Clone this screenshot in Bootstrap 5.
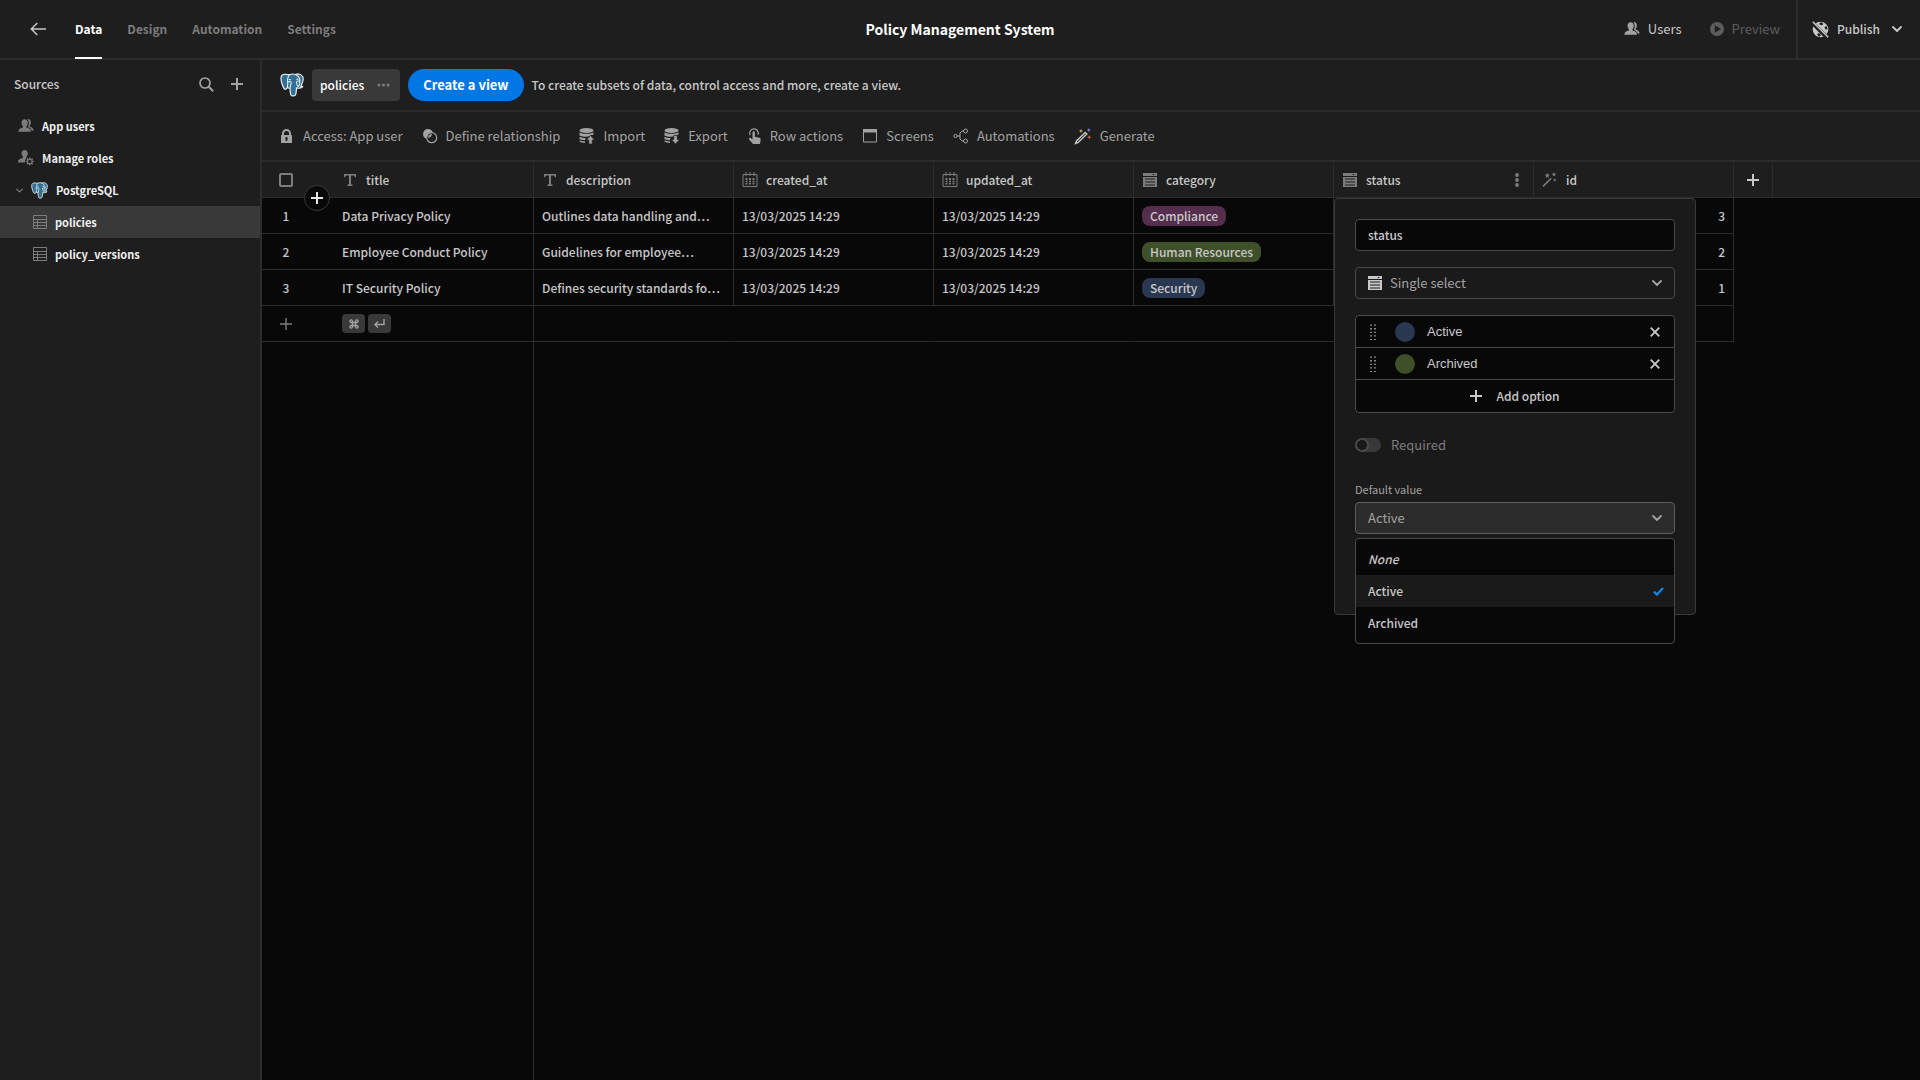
<!DOCTYPE html>
<html lang="en" data-bs-theme="dark">
<head>
<meta charset="utf-8">
<meta name="viewport" content="width=device-width, initial-scale=1">
<title>Policy Management System</title>
<link href="https://cdn.jsdelivr.net/npm/bootstrap@5.3.0/dist/css/bootstrap.min.css" rel="stylesheet">
<style>
:root{--g50:#080808;--g75:#1a1a1a;--g100:#1e1e1e;--g200:#2c2c2c;--g300:#393939;--g400:#494949;--g500:#5c5c5c;--g600:#7c7c7c;--g700:#a2a2a2;--g800:#c8c8c8;--g900:#efefef;--fs:12px;--fs-quiet:13px}
body{font-family:"Noto Sans CJK SC","Noto Sans",sans-serif;font-size:var(--fs);line-height:20px;font-weight:500;color:var(--g800);background:var(--g50)}
button{background:none;border:0;padding:0;color:inherit;font:inherit}
a{color:inherit;text-decoration:none}
svg{display:block;flex:none;fill:currentColor}
.ln{fill:none;stroke:currentColor}
.topbar{height:60px;background:var(--g100);border-bottom:2px solid var(--g200)}
.backlink{padding:0 29px 0 30px}
.tabs{gap:25px;color:var(--g600);font-weight:700}
.tabs a{height:60px;line-height:60px;border-bottom:2px solid transparent}
.tabs a.on{color:#fff;border-color:#fff}
.apptitle{font-size:14px;font-weight:700;color:#fff}
.quiet{font-size:var(--fs-quiet);font-weight:400}
.off{color:var(--g500)}
.pub{height:58px;border-left:2px solid var(--g200);padding:0 18px 0 14px}
.side{width:262px;background:var(--g100);border-right:2px solid var(--g200)}
.sidehead{height:48px;margin-bottom:2px;padding:0 17px 0 14px}
.srclist{font-size:11px;font-weight:700;color:var(--g900)}
.srclist a{height:32px;padding-left:18px;gap:8px}
.srclist a.src{padding-left:16px}
.srclist a.sub{padding-left:32px;gap:7px}
.srclist a.on{background:var(--g300)}
.bar1{height:52px;background:var(--g100);border-bottom:2px solid var(--g200);padding:0 18px}
.bar2{height:50px;background:var(--g100);border-bottom:2px solid var(--g200);padding:0 17px;gap:19px;color:var(--g700);font-size:var(--fs-quiet);font-weight:400}
.bar2 button{gap:8px}
.viewtab{height:32px;background:var(--g300);border-radius:4px;padding:0 10px 0 8px;color:#fff;gap:13px}
.cta{height:32px;line-height:20px;border-radius:16px;background:#0177e6;color:#fff;font-size:13px;font-weight:700;padding:0 14px}
.cta:hover{background:#0169cc;color:#fff}
.grid{table-layout:fixed;border-collapse:separate;border-spacing:0;width:100%}
.grid th,.grid td{height:36px;padding:0 8px;border-bottom:1px solid var(--g200);border-right:1px solid var(--g200);white-space:nowrap;font-weight:500}
.grid th{background:var(--g100);position:relative}
.grid .gut{border-right:0;text-align:center;padding:0 24px 0 0}
.grid .rest,.grid .none{border-right:0}
.grid td.none{border-bottom:0}
.grid .newrow td{border-right-color:transparent}
.grid .newrow td.keep{border-right-color:var(--g200)}
.hd{gap:8px}
.hd svg{color:var(--g600)}
.tick{appearance:none;display:block;margin:0 auto;width:14px;height:14px;border:2px solid var(--g600);border-radius:2px;background:transparent}
.addrow{position:absolute;left:42px;top:23px;width:26px;height:26px;border-radius:50%;background:var(--g50);border:1px solid var(--g300);z-index:3;color:#e6e6e6}
.pill{display:inline-block;height:20px;line-height:20px;border-radius:8px;padding:0 8px;vertical-align:middle}
.purple{background:#552e4e}.green{background:#3f4f2a}.blue{background:#2a3750}
.keys{gap:3px}
.keycap{width:23px;height:19px;border-radius:4px;background:var(--g300);color:var(--g700)}
.tail{width:272px;border-right:1px solid var(--g200)}
.pop{position:absolute;left:0;top:36px;width:362px;height:417px;background:var(--g75);border:1px solid var(--g300);border-radius:4px;padding:20px;z-index:5;color:var(--g800)}
.box{border:1px solid var(--g400);border-radius:4px;height:32px}
.box input,.box select,.opts input{appearance:none;background:transparent;border:0;outline:0;color:inherit;font:inherit;padding:0;min-width:0}
.box select{color:var(--g700);font-size:var(--fs-quiet);font-weight:400}
.box .arrow{color:var(--g700);margin-right:12px}
.dark{background:var(--g50)}
.open{background:var(--g200);border-color:var(--g500)}
.opts{border:1px solid var(--g400);border-radius:4px;background:var(--g50)}
.opts>div{height:32px;border-bottom:1px solid var(--g400);padding:0 14px 0 14px;gap:12px}
.opts input{font-family:"Liberation Sans",sans-serif;font-size:13px}
.opts .handle{margin-right:7px}
.opts button.add{height:32px;gap:14px}
.dot{width:20px;height:20px;border-radius:50%}
.req{height:32px;gap:10px;color:var(--g600)}
.switch{appearance:none;width:26px;height:14px;margin:0;border-radius:7px;background:radial-gradient(circle at 7px 7px,var(--g75) 5px,var(--g400) 5px,var(--g400) 7px,transparent 7px) var(--g300)}
.menu{position:absolute;left:-1px;right:-1px;top:35px;background:var(--g50);border:1px solid var(--g400);border-radius:4px;padding:4px 0;z-index:6}
.menu button{display:flex;align-items:center;justify-content:space-between;width:100%;height:32px;padding:0 10px 0 12px}
.menu button.on{background:var(--g75)}
.fieldlabel{font-size:11px;font-weight:400;color:var(--g700);line-height:17px}
</style>
</head>
<body class="vh-100 d-flex flex-column overflow-hidden">
<svg width="0" height="0" class="position-absolute" aria-hidden="true">
  <symbol id="pg" viewBox="0 0 24 24">
    <path d="M6.2 1.4C3 .8.7 2.3 1 6c.2 3 1.900 8.500 3.500 10 1 .9 2-.4 3-1.600.6.6 1.500.8 2.500.6.1 2.500.2 5.200.8 6.700.7 1.700 4.300 1.800 5-.6.5-1.900.6-4.400.7-6.200 1.800.5 4.400.3 5.900-.9.700-.6-.2-.9-1.500-.9C22.500 10 24 5.500 22.600 3.500 20.500.8 17.500.7 15.400 1.500 13.500.9 11 .900 9.500 1.800 8.500 1.500 7.400 1.400 6.200 1.400z" fill="#336f93" stroke="#e9eef2" stroke-width="1.200"/>
    <path d="M9.500 1.900C7 4 7.500 8.500 7.700 10.500c.1 1.500-.3 2.600-.2 3.600M8 9c1-.7 3-.8 3.200.5.200 1.700-1.200 2.900-1 4.700M15.500 1.500c3 1.700 4.600 4.500 4.300 6.200-.4 2 .4 3.300-.9 5.200M16.500 9c1-1.200 2.500-1 3.300-.6M16.400 9c.2 2 .9 3.700 1.900 4.600M9.300 6.500l1.300.3M16.800 6.300l1.200-.2" fill="none" stroke="#e9eef2" stroke-width="1.100" stroke-linecap="round"/>
  </symbol>
  <symbol id="users" viewBox="0 0 18 18">
    <path d="M7.500 1.500c2.200 0 3.500 1.600 3.500 3.800 0 1.700-.6 3-1.500 4v1.300c2.700.6 5 1.700 5 4v.9H.5v-.9c0-2.300 2.300-3.400 5-4V9.300C4.600 8.300 4 7 4 5.300c0-2.200 1.300-3.800 3.500-3.800z"/>
    <path d="M10.500 1.200C13 .9 14.600 2.600 14.500 5c0 1.600-.6 2.700-1.400 3.600v1.100c2.300.7 4.400 2 4.500 4.500h-2.200c-.4-2.100-2-3.500-4.300-4.200.7-1.200 1.100-2.700 1-4.400-.1-1.800-.6-3.400-1.600-4.400z"/>
  </symbol>
  <symbol id="roles" viewBox="0 0 18 18">
    <path d="M7.500 0C9.700 0 11 1.500 11 3.700c0 1.700-.6 3-1.500 4V9l-.9 1.300c-.8 1.100-.9 2.400-.6 3.700H0v-.9c0-2.400 2.500-3.500 5.500-4.100V7.700C4.600 6.700 4 5.400 4 3.700 4 1.500 5.300 0 7.500 0z"/>
    <circle cx="13.300" cy="12.800" r="2.600" class="ln" stroke-width="1.300"/>
    <path class="ln" stroke-width="1.400" d="M13.300 8.300v1.500M13.300 15.800v1.500M8.800 12.800h1.500M16.300 12.800h1.500M10.100 9.600l1.100 1.100M15.400 14.900l1.100 1.100M16.500 9.600l-1.100 1.100M11.200 14.900l-1.100 1.100"/>
  </symbol>
  <symbol id="tbl" viewBox="0 0 14 14"><path class="ln" stroke-width="1" d="M.5.5h13v13H.5zM.5 4.500h13M.5 7.500h13M.5 10.500h13M4.500 4.500v9"/></symbol>
  <symbol id="plus" viewBox="0 0 12 12"><path class="ln" stroke-width="2" d="M6 0v12M0 6h12"/></symbol>
  <symbol id="plusthin" viewBox="0 0 12 12"><path class="ln" stroke-width="1.400" d="M6 0v12M0 6h12"/></symbol>
  <symbol id="chev" viewBox="0 0 10 6"><path class="ln" stroke-width="1.800" stroke-linecap="round" stroke-linejoin="round" d="M1 1l4 4 4-4"/></symbol>
  <symbol id="txt" viewBox="0 0 12 12"><path d="M0 0h12v3.200h-1.200c0-1.200-.5-1.700-1.700-1.700H7v8.300c0 .6.400.8 1.500.9V12h-5v-1.300c1.100-.1 1.500-.3 1.500-.9V1.500H2.900c-1.200 0-1.700.5-1.700 1.700H0z"/></symbol>
  <symbol id="cal" viewBox="0 0 15 15"><path class="ln" d="M.5 2.500h14v12H.5zM3.500 0v4M11.500 0v4M7.500 0v4"/><path d="M3 6h2v2H3zM6.500 6h2v2h-2zM10 6h2v2h-2zM3 8.700h2v1.600H3zM6.500 8.700h2v1.600h-2zM10 8.700h2v1.600h-2zM3 11h2v1.600H3zM6.500 11h2v1.600h-2zM10 11h2v1.600h-2z"/></symbol>
  <symbol id="opt" viewBox="0 0 14 14"><path fill-rule="evenodd" d="M0 0h14v3H0zM9.200 1l1.300 1.300L11.800 1zM0 4h14v10H0zM2 5.400v1.100h10V5.400zM2 8.400v1.100h10V8.400zM2 11.400v1.100h10v-1.100z"/></symbol>
  <symbol id="wand" viewBox="0 0 15 15"><path class="ln" stroke-width="1.600" d="M.6 14.400L8.700 6.300"/><path d="M4.800.8l.7 1.700 1.900.3-1.400 1.200.3 1.900-1.500-1-1.700 1 .5-1.900L2.200 2.800l1.900-.3zM11.500 0l.6 1.500 1.600.2-1.200 1 .3 1.600-1.300-.8-1.400.8.400-1.600-1.200-1 1.600-.2zM12.300 6.200l.4 1.200 1.300.2-1 .8.200 1.200-.9-.6-1.100.6.300-1.200-.9-.8 1.200-.2z"/></symbol>
  <symbol id="cross" viewBox="0 0 10 10"><path class="ln" stroke-width="1.800" d="M.7.7l8.600 8.600M9.300.7L.7 9.300"/></symbol>
  <symbol id="grip" viewBox="0 0 6 16"><path class="ln" stroke-width="1.300" stroke-dasharray="1.300 2.300" d="M1 .5v15.500M5 .5v15.500"/></symbol>
  <symbol id="db" viewBox="0 0 16 16"><ellipse cx="7.500" cy="2.500" rx="7" ry="2.500"/><path d="M.5 4.200c2.500 2.200 11.500 2.200 14 0v2.300c-1 .5-2 .7-3 .8L9.500 8.600c-3.500.4-7-.2-9-1.200zM.5 8.800c1.500.8 3.800 1.200 6.200 1.200l-.9 2.200c-2-.1-4-.5-5.300-1.100zM.5 12.300c1.400.7 3.500 1.100 5.500 1.200V15c-2.500-.1-4.700-.6-5.500-1.500z"/></symbol>
</svg>

<header class="topbar d-flex align-items-center flex-shrink-0">
  <div class="d-flex align-items-center flex-fill w-25">
    <a href="#" class="backlink" aria-label="Back"><svg width="16" height="14" viewBox="0 0 16 14"><path class="ln" stroke-width="1.500" d="M16 7H1.500M7.300 1l-6 6 6 6"/></svg></a>
    <nav class="tabs d-flex"><a href="#" class="on">Data</a><a href="#">Design</a><a href="#">Automation</a><a href="#">Settings</a></nav>
  </div>
  <div class="apptitle">Policy Management System</div>
  <div class="d-flex align-items-center justify-content-end flex-fill w-25">
    <button class="quiet d-flex align-items-center gap-2"><svg width="16" height="16" color="#a2a2a2"><use href="#users"/></svg>Users</button>
    <button class="quiet off d-flex align-items-center gap-2 ms-4 me-3" disabled><svg class="ms-1" width="14" height="14" viewBox="0 0 14 14"><path fill-rule="evenodd" d="M7 0a7 7 0 1 0 0 14A7 7 0 0 0 7 0zM4.800 3.300v7.400L11 7z"/></svg>Preview</button>
    <button class="pub d-flex align-items-center gap-2"><svg width="17" height="17" viewBox="0 0 17 17"><circle cx="8.500" cy="8.500" r="7.800"/><path d="M9 1l2.500 2-2 1.500L7 3zM5 13l2-1 2 2-2 2zM12.500 6l2-1 1 3-2 .8z" fill="#1e1e1e"/><path d="M0 1.500L15 16.500" stroke="#1e1e1e" stroke-width="4"/><path d="M.8.8l15.400 15.400" stroke="currentColor" stroke-width="1.600"/></svg>Publish<svg class="ms-1" width="10" height="6"><use href="#chev"/></svg></button>
  </div>
</header>

<div class="d-flex flex-fill">
  <aside class="side flex-shrink-0">
    <div class="sidehead d-flex align-items-center"><span class="me-auto">Sources</span>
      <button aria-label="Search" class="me-3"><svg width="16" height="15" viewBox="0 0 16 15" color="#a2a2a2"><circle class="ln" cx="6" cy="6" r="5" stroke-width="1.700"/><path class="ln" stroke-width="2" d="M9.700 9.700l4.500 4.500"/></svg></button>
      <button aria-label="Add source"><svg width="12" height="12" color="#a2a2a2"><use href="#plus"/></svg></button>
    </div>
    <nav class="srclist">
      <a href="#" class="d-flex align-items-center"><svg width="16" height="16" color="#7c7c7c"><use href="#users"/></svg>App users</a>
      <a href="#" class="d-flex align-items-center"><svg width="16" height="16" color="#7c7c7c"><use href="#roles"/></svg>Manage roles</a>
      <a href="#" class="src d-flex align-items-center"><svg width="7" height="5" color="#7c7c7c"><use href="#chev"/></svg><svg width="17" height="17"><use href="#pg"/></svg>PostgreSQL</a>
      <a href="#" class="sub on d-flex align-items-center"><svg width="16" height="14" color="#7c7c7c"><use href="#tbl"/></svg>policies</a>
      <a href="#" class="sub d-flex align-items-center"><svg width="16" height="14" color="#7c7c7c"><use href="#tbl"/></svg>policy_versions</a>
    </nav>
  </aside>

  <main class="flex-fill d-flex flex-column">
    <div class="bar1 d-flex align-items-center gap-2">
      <svg width="24" height="24"><use href="#pg"/></svg>
      <button class="viewtab d-flex align-items-center">policies<svg width="13" height="4" viewBox="0 0 13 4" color="#7c7c7c"><circle cx="2" cy="2" r="1.500"/><circle cx="6.500" cy="2" r="1.500"/><circle cx="11" cy="2" r="1.500"/></svg></button>
      <button class="btn cta">Create a view</button>
      <span>To create subsets of data, control access and more, create a view.</span>
    </div>
    <div class="bar2 d-flex align-items-center">
      <button class="d-flex align-items-center"><svg width="16" height="16" viewBox="0 0 16 16"><path fill-rule="evenodd" d="M2 7h1V5.500a4.500 4.500 0 0 1 9 0V7h1v8H2zM5 7h5V5.500a2.500 2.500 0 0 0-5 0zM6.300 10.300l.6 2.700h1.200l.6-2.700a1.200 1.200 0 1 0-2.400 0z"/></svg>Access: App user</button>
      <button class="d-flex align-items-center"><svg width="16" height="16" viewBox="0 0 16 16"><path d="M6 1a5 5 0 0 1 4.800 3.600A5.300 5.300 0 0 0 4.700 10.800 5 5 0 0 1 6 1z"/><circle class="ln" cx="9.700" cy="9.700" r="5" stroke-width="1.200"/><path d="M6 9.800c.2-2.300 1.600-3.800 3.800-4 .2 2.200-1.300 4-3.800 4z"/></svg>Define relationship</button>
      <button class="d-flex align-items-center"><svg width="16" height="16" viewBox="0 0 16 16"><use href="#db" width="16" height="16"/><path d="M11.500 7.500l4 4.500h-2.300v4H9.800v-4H7.500z" stroke="#1e1e1e" stroke-width=".6"/></svg>Import</button>
      <button class="d-flex align-items-center"><svg width="16" height="16" viewBox="0 0 16 16"><use href="#db" width="16" height="16"/><path d="M11.500 16l4-4.500h-2.300v-4H9.800v4H7.500z" stroke="#1e1e1e" stroke-width=".6"/></svg>Export</button>
      <button class="d-flex align-items-center"><svg width="15" height="16" viewBox="0 0 15 16"><path class="ln" stroke-width="1.200" d="M3.200 7.200a4.300 4.300 0 1 1 7.700-.4"/><path d="M5.500 4.500c0-1.700 2.400-1.700 2.400 0v4.300l4.500.9c1.200.3 1.400 1 1.200 2.200L13 16H6l-3.800-4.600c-.8-1.200.6-2 1.500-1.300l1.800 1.300z"/></svg>Row actions</button>
      <button class="d-flex align-items-center"><svg width="16" height="14" viewBox="0 0 16 14"><path class="ln" d="M1.500.500h13v12.500h-13z"/><path d="M1 0h14v3.500H1z"/></svg>Screens</button>
      <button class="d-flex align-items-center"><svg width="16" height="16" viewBox="0 0 16 16"><g class="ln"><circle cx="2.500" cy="8" r="1.600"/><circle cx="12.500" cy="3" r="2"/><circle cx="12.500" cy="13" r="2"/><path d="M4.100 8H7M10.500 3H9L7 5v6l2 2h1.500"/></g></svg>Automations</button>
      <button class="d-flex align-items-center"><svg width="18" height="17" viewBox="0 0 18 17"><path d="M1.500 15.500l1-2.500 8.700-8.500 1.600 1.500-8.600 8.500z" fill="none" stroke="#c8c8c8" stroke-width="1.400"/><path d="M7 .8l.6 1.600 1.600.6-1.600.6L7 5.200l-.6-1.600L4.800 3l1.600-.6z" fill="#e8c14d"/><path d="M14.800 0l.6 1.500 1.600.6-1.600.6-.6 1.500-.6-1.500-1.600-.6 1.600-.6z" fill="#7d84f5"/><path d="M15.200 7l.6 1.600 1.700.6-1.700.6-.6 1.700-.6-1.700-1.700-.6 1.700-.6z" fill="#e8594f"/></svg>Generate</button>
    </div>

    <table class="grid">
      <colgroup><col style="width:72px"><col style="width:200px"><col style="width:200px"><col style="width:200px"><col style="width:200px"><col style="width:200px"><col style="width:200px"><col style="width:200px"><col style="width:39px"><col></colgroup>
      <thead><tr>
        <th class="gut"><input type="checkbox" class="tick" aria-label="Select all rows"><button class="addrow d-flex align-items-center justify-content-center" aria-label="Add row"><svg width="12" height="12"><use href="#plus"/></svg></button></th>
        <th><div class="hd d-flex align-items-center"><svg width="16" height="12"><use href="#txt"/></svg>title</div></th>
        <th><div class="hd d-flex align-items-center"><svg width="16" height="12"><use href="#txt"/></svg>description</div></th>
        <th><div class="hd d-flex align-items-center"><svg width="16" height="15"><use href="#cal"/></svg>created_at</div></th>
        <th><div class="hd d-flex align-items-center"><svg width="16" height="15"><use href="#cal"/></svg>updated_at</div></th>
        <th><div class="hd d-flex align-items-center"><svg width="16" height="14"><use href="#opt"/></svg>category</div></th>
        <th><div class="hd d-flex align-items-center"><svg width="16" height="14"><use href="#opt"/></svg>status
          <button class="ms-auto me-1" aria-label="Column menu"><svg width="8" height="14" viewBox="0 0 8 14"><circle cx="4" cy="2" r="1.900"/><circle cx="4" cy="7" r="1.900"/><circle cx="4" cy="12" r="1.900"/></svg></button></div>
          <form class="pop d-flex flex-column gap-3" onsubmit="return false">
            <div class="box dark d-flex align-items-center px-2"><input class="flex-fill ms-1" value="status" aria-label="Column name"></div>
            <div class="box d-flex align-items-center ps-2"><svg class="ms-1 me-2" width="14" height="14"><use href="#opt"/></svg><select class="flex-fill" aria-label="Type"><option>Single select</option></select><svg width="10" height="6" class="arrow"><use href="#chev"/></svg></div>
            <div class="opts d-flex flex-column">
              <div class="d-flex align-items-center"><svg class="handle" width="6" height="16"><use href="#grip"/></svg><span class="dot blue"></span><input class="flex-fill" value="Active" aria-label="Option 1"><button aria-label="Remove Active"><svg width="10" height="10"><use href="#cross"/></svg></button></div>
              <div class="d-flex align-items-center"><svg class="handle" width="6" height="16"><use href="#grip"/></svg><span class="dot green"></span><input class="flex-fill" value="Archived" aria-label="Option 2"><button aria-label="Remove Archived"><svg width="10" height="10"><use href="#cross"/></svg></button></div>
              <button class="add d-flex align-items-center justify-content-center"><svg width="12" height="12"><use href="#plus"/></svg>Add option</button>
            </div>
            <div class="req quiet d-flex align-items-center"><input type="checkbox" role="switch" class="switch" id="req"><label for="req">Required</label></div>
            <div>
              <label class="fieldlabel d-block mt-1 mb-1" for="def">Default value</label>
              <div class="box open d-flex align-items-center position-relative"><select id="def" class="flex-fill ms-2 ps-1"><option>Active</option></select><svg width="10" height="6" class="arrow"><use href="#chev"/></svg>
                <div class="menu" role="listbox">
                  <button role="option"><i>None</i></button>
                  <button role="option" class="on" aria-selected="true">Active<svg width="11" height="9" viewBox="0 0 11 9" color="#1385e0"><path class="ln" stroke-width="2.200" d="M.9 4.600l3 3L10 .9"/></svg></button>
                  <button role="option">Archived</button>
                </div>
              </div>
            </div>
          </form></th>
        <th><div class="hd d-flex align-items-center"><svg width="16" height="15"><use href="#wand"/></svg>id</div></th>
        <th><button class="d-block mx-auto" aria-label="Add column"><svg width="12" height="12"><use href="#plus"/></svg></button></th>
        <th class="rest"></th>
      </tr></thead>
      <tbody>
        <tr><td class="gut">1</td><td>Data Privacy Policy</td><td>Outlines data handling and…</td><td>13/03/2025 14:29</td><td>13/03/2025 14:29</td><td><span class="pill purple">Compliance</span></td><td></td><td class="text-end">3</td><td class="none" colspan="2"></td></tr>
        <tr><td class="gut">2</td><td>Employee Conduct Policy</td><td>Guidelines for employee…</td><td>13/03/2025 14:29</td><td>13/03/2025 14:29</td><td><span class="pill green">Human Resources</span></td><td></td><td class="text-end">2</td><td class="none" colspan="2"></td></tr>
        <tr><td class="gut">3</td><td>IT Security Policy</td><td>Defines security standards fo…</td><td>13/03/2025 14:29</td><td>13/03/2025 14:29</td><td><span class="pill blue">Security</span></td><td></td><td class="text-end">1</td><td class="none" colspan="2"></td></tr>
        <tr class="newrow"><td class="gut"><svg class="mx-auto" width="12" height="12" color="#7c7c7c"><use href="#plusthin"/></svg></td><td class="keep"><div class="keys d-flex"><span class="keycap d-flex align-items-center justify-content-center"><svg width="10" height="10" viewBox="0 0 10 10"><path class="ln" stroke-width="1.400" d="M3.500 3.500H2A1.300 1.300 0 1 1 3.500 2zM6.500 3.500V2A1.300 1.300 0 1 1 8 3.500zM6.500 6.500H8A1.300 1.300 0 1 1 6.500 8zM3.500 6.500V8A1.300 1.300 0 1 1 2 6.500zM3.500 3.500h3v3h-3z"/></svg></span><span class="keycap d-flex align-items-center justify-content-center"><svg width="11" height="9" viewBox="0 0 11 9"><path class="ln" stroke-width="1.400" d="M10 0v5.500H1M4 2.500l-3 3 3 3"/></svg></span></div></td><td></td><td></td><td></td><td></td><td></td><td class="keep"></td><td class="none" colspan="2"></td></tr>
      </tbody>
    </table>
    <div class="tail flex-fill"></div>
  </main>
</div>
<script src="https://cdn.jsdelivr.net/npm/bootstrap@5.3.0/dist/js/bootstrap.bundle.min.js"></script>
</body>
</html>
